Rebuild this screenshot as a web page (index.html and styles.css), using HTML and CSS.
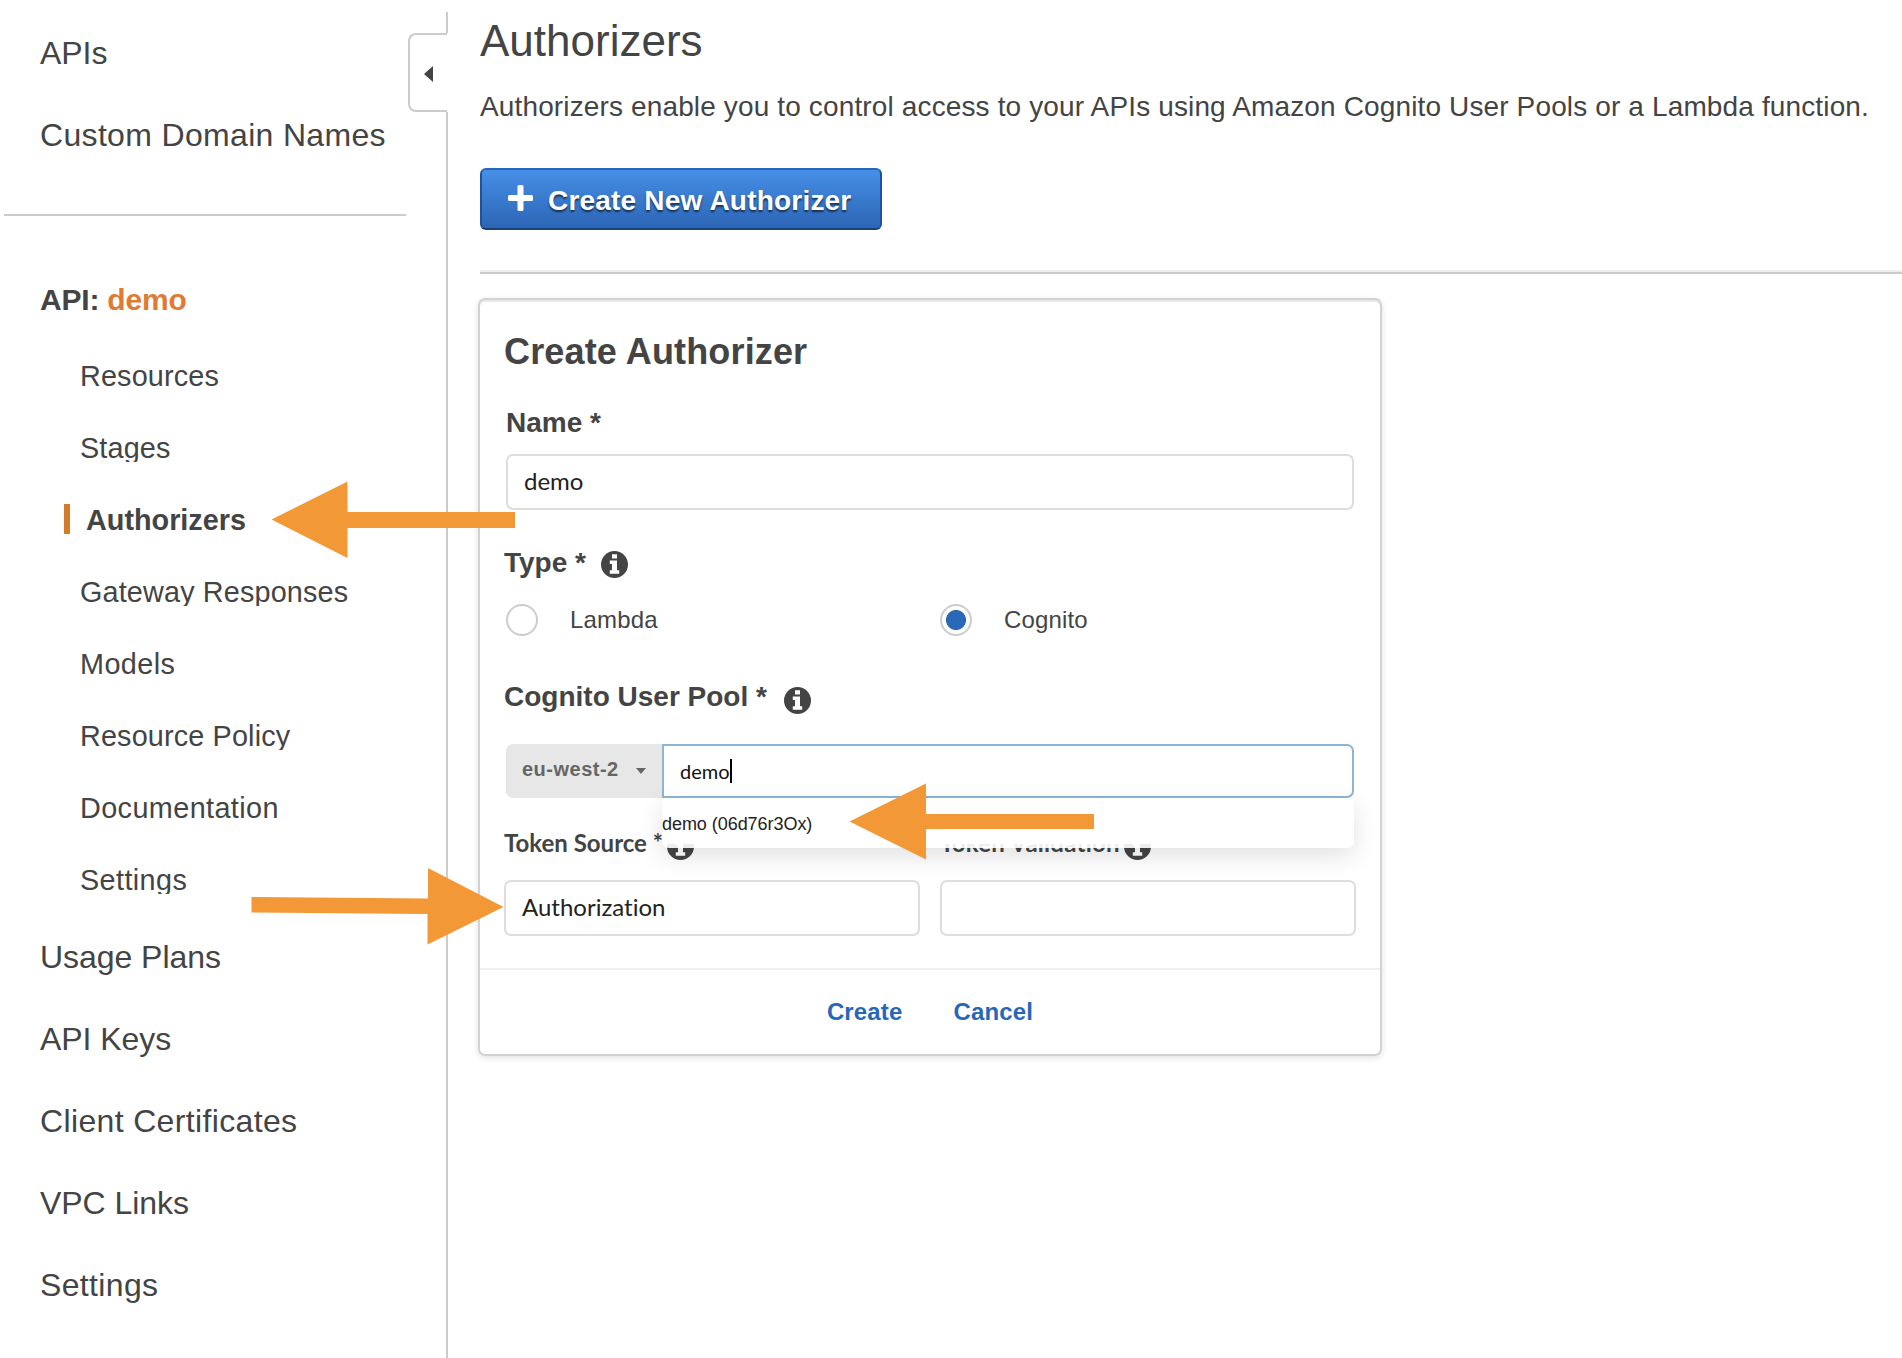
FILE: index.html
```html
<!DOCTYPE html>
<html lang="en">
<head>
<meta charset="utf-8">
<title>Authorizers</title>
<link rel="stylesheet" href="styles.css">
</head>
<body>
<svg class="defs" width="0" height="0">
  <symbol id="info" viewBox="0 0 27 27">
    <circle cx="13.5" cy="13.5" r="13.5" fill="#444"/>
    <path fill="#fff" d="M11 3.2h5v4.3h-5zM8.8 9.4H16v9.8h2.2v3.6H8.8v-3.6H11V13H8.8z"/>
  </symbol>
</svg>
<div class="page">
  <nav class="sidebar">
    <a class="nav-item tight">APIs</a>
    <a class="nav-item">Custom Domain Names</a>
    <div class="nav-rule"></div>
    <div class="api-name">API: <span class="accent">demo</span></div>
    <div class="sub-nav">
      <a class="sub-item">Resources</a>
      <a class="sub-item">Stages</a>
      <a class="sub-item active">Authorizers</a>
      <a class="sub-item">Gateway Responses</a>
      <a class="sub-item loose">Models</a>
      <a class="sub-item">Resource Policy</a>
      <a class="sub-item loose">Documentation</a>
      <a class="sub-item loose">Settings</a>
    </div>
    <a class="nav-item tight">Usage Plans</a>
    <a class="nav-item tight">API Keys</a>
    <a class="nav-item loose">Client Certificates</a>
    <a class="nav-item tight">VPC Links</a>
    <a class="nav-item loose">Settings</a>
  </nav>
  <div class="splitter">
    <div class="line-top"></div>
    <div class="collapse-tab"><svg width="9" height="16" viewBox="0 0 9 16"><path d="M9 0v16L0 8z" fill="#444"/></svg></div>
    <div class="line-rest"></div>
  </div>
  <main class="main">
    <h1 class="title">Authorizers</h1>
    <p class="intro">Authorizers enable you to control access to your APIs using Amazon Cognito User Pools or a Lambda function.</p>
    <button class="new-button"><svg width="25" height="26" viewBox="0 0 25 26"><path d="M9.5 1.5q0-1.500 1.500-1.500h3q1.500 0 1.500 1.500V10H23.500q1.500 0 1.500 1.500v3q0 1.500-1.500 1.500H15.500v8.500q0 1.500-1.500 1.500h-3q-1.500 0-1.500-1.500V16H1.500Q0 16 0 14.500v-3Q0 10 1.500 10H9.500z" fill="#fff"/></svg><span>Create New Authorizer</span></button>
    <div class="rule"></div>
    <section class="card">
      <div class="card-body">
        <h2 class="card-title">Create Authorizer</h2>
        <div class="label name-label">Name *</div>
        <div class="input name-input">demo</div>
        <div class="label type-label">Type * <svg class="info type-info"><use href="#info"/></svg></div>
        <div class="radios">
          <div class="radio"><span class="circle"></span>Lambda</div>
          <div class="radio"><span class="circle checked"></span>Cognito</div>
        </div>
        <div class="label pool-label"><span>Cognito User Pool *</span> <svg class="info pool-info"><use href="#info"/></svg></div>
        <div class="pool-row">
          <div class="region">eu-west-2<svg width="10" height="6" viewBox="0 0 10 6"><path d="M0 0h10L5 6z" fill="#666"/></svg></div>
          <div class="pool-input">demo<span class="caret"></span></div>
          <div class="suggestions"><div class="suggestion">demo (06d76r3Ox)</div></div>
        </div>
        <div class="tokens">
          <div class="token">
            <div class="token-label"><span>Token Source *</span><svg class="info"><use href="#info"/></svg></div>
            <div class="input">Authorization</div>
          </div>
          <div class="token">
            <div class="token-label validation"><span>Token Validation</span><svg class="info"><use href="#info"/></svg></div>
            <div class="input"></div>
          </div>
        </div>
      </div>
      <div class="card-footer"><a>Create</a><a>Cancel</a></div>
    </section>
  </main>
</div>
<svg class="arrows" width="1902" height="1358" viewBox="0 0 1902 1358" fill="#f29837">
  <path d="M271.500 519.500L347.500 481.500V512H515V528H347.500V558z"/>
  <path d="M251.500 897L428 898.500V868L503.500 907L427.500 944.500V914L251.500 912.500z"/>
  <path d="M849.500 821.500L926 783.500V814H1094V829H926V859.500z"/>
</svg>
</body>
</html>
```
FILE: styles.css
```css
* { box-sizing: border-box; }
body {
  margin: 0;
  background: #fff;
  color: #444;
  font-family: "Liberation Sans", Arial, sans-serif;
  overflow: hidden;
}
.defs { position: absolute; }
.page { display: flex; height: 1358px; overflow: hidden; }

.sidebar { width: 408px; padding-top: 12px; flex: none; }
.nav-item {
  display: block;
  padding-left: 40px;
  font-size: 32px;
  line-height: 82px;
  letter-spacing: 0.33px;
  white-space: nowrap;
}
.nav-item.tight { letter-spacing: -0.05px; }
.nav-item.loose { letter-spacing: 0.35px; }
.nav-rule { height: 2px; margin: 38px 2px 48px 4px; background: #ccc; }
.api-name { padding-left: 40px; font-size: 30px; line-height: 72px; font-weight: bold; letter-spacing: -0.2px; }
.accent { color: #e07b35; }
.sub-nav {
  display: flex;
  flex-direction: column;
  gap: 42px;
  padding: 24px 0 22px 64px;
}
.sub-item {
  height: 30px;
  overflow: hidden;
  padding-left: 16px;
  font-size: 28.8px;
  line-height: 32px;
  letter-spacing: 0.15px;
}
.sub-item.loose { letter-spacing: 0.4px; }
.sub-item.active { font-weight: bold; border-left: 6px solid #d47b2b; letter-spacing: 0; }

.splitter { width: 40px; flex: none; display: flex; flex-direction: column; padding-top: 12px; }
.line-top { height: 21px; border-right: 2px solid #ccc; }
.collapse-tab {
  height: 79px;
  margin-right: 1px;
  border: 2px solid #ccc;
  border-right: 0;
  border-radius: 8px 0 0 8px;
  padding: 2px 0 0 14px;
  display: flex;
  align-items: center;
}
.line-rest { flex: 1; border-right: 2px solid #ccc; }

.main { flex: 1; padding: 11px 0 0 32px; }
.title { margin: 0; font-size: 44px; line-height: 60px; font-weight: normal; }
.intro { margin: 16px 0 0; font-size: 28px; line-height: 40px; letter-spacing: 0.137px; white-space: nowrap; }
.new-button {
  display: flex;
  align-items: center;
  gap: 15px;
  width: 402px;
  height: 62px;
  margin: 41px 0 0;
  padding: 3px 0 0 26px;
  border: 2px solid;
  border-color: #2766bb #1f529a #1c4174;
  border-radius: 6px;
  background: linear-gradient(#468fe7, #2c65b5);
  color: #fff;
  font: bold 28px/40px "Liberation Sans", Arial, sans-serif;
  letter-spacing: 0.2px;
  text-shadow: 0 2px 2px rgba(0, 0, 0, 0.6);
  white-space: nowrap;
}
.new-button svg { margin-bottom: 6px; }
.rule { height: 4px; margin-top: 40px; background: linear-gradient(#eee 50%, #ccc 50%); }

.card {
  width: 904px;
  height: 758px;
  margin: 24px 0 0 -2px;
  border: 2px solid #d2d2d2;
  border-radius: 7px;
  box-shadow: 0 2px 6px rgba(0, 0, 0, 0.12), inset 0 2px 0 #e8e8e8;
}
.card-body { height: 668px; padding: 32px 24px 0; }
.card-title { margin: 0; font-size: 36px; line-height: 40px; letter-spacing: 0.15px; }
.label { display: flex; align-items: center; height: 32px; padding-top: 2px; font-size: 28px; line-height: 32px; font-weight: bold; }
.name-label { margin: 34px 0 0 2px; }
.input {
  height: 56px;
  padding-left: 16px;
  border: 2px solid #ddd;
  border-radius: 7px;
  color: #222;
  font: 24px/50px Lato, sans-serif;
  font-variant-ligatures: none;
}
.name-input { width: 848px; margin: 16px 0 0 2px; }
.type-label { margin-top: 36px; }
.info { width: 27px; height: 27px; flex: none; }
.type-info { margin: 2px 0 0 15px; }
.radios { display: flex; margin: 26px 0 0 2px; }
.radio { display: flex; flex: none; align-items: center; gap: 32px; width: 434px; font-size: 24px; line-height: 32px; letter-spacing: 0.15px; }
.radio + .radio { width: 200px; }
.circle { width: 32px; height: 32px; border: 2px solid #ccc; border-radius: 50%; }
.circle.checked { background: radial-gradient(circle, #2a68b8 9.600px, #fff 10.400px); }
.pool-label { margin-top: 44px; }
.pool-info { margin: 6px 0 0 17px; }
.pool-row { position: relative; display: flex; width: 848px; margin: 32px 0 0 2px; }
.region {
  display: flex;
  align-items: center;
  gap: 17px;
  width: 156px;
  height: 54px;
  padding: 0 0 3px 16px;
  border-radius: 7px 0 0 7px;
  background: #e7e7e7;
  color: #666;
  font-weight: bold;
  font-size: 20px;
  letter-spacing: 0.5px;
}
.region svg { margin-top: 3px; }
.pool-input {
  display: flex;
  align-items: center;
  flex: 1;
  height: 54px;
  padding-left: 16px;
  border: 2px solid #8cb4d5;
  border-radius: 0 7px 7px 0;
  color: #111;
  font: 20px/24px Lato, sans-serif;
}
.caret { width: 2px; height: 24px; background: #000; }
.suggestions {
  position: absolute;
  z-index: 1;
  left: 156px;
  top: 54px;
  width: 692px;
  height: 50px;
  border-radius: 0 0 7px 7px;
  background: linear-gradient(#fff 46px, rgba(255, 255, 255, 0.9) 46px);
  box-shadow: 0 8px 24px rgba(0, 0, 0, 0.12);
}
.suggestion { color: #222; font-size: 18px; line-height: 52px; letter-spacing: -0.05px; }
.tokens { display: flex; gap: 20px; margin-top: 30px; }
.token { width: 416px; }
.token-label { display: flex; height: 30px; margin-bottom: 22px; font: bold 24px/30px Lato, sans-serif; }
.token-label.validation { letter-spacing: 0.25px; }
.token-label .info { margin: 5px 0 0 4px; }
.card-footer {
  display: flex;
  justify-content: center;
  gap: 51px;
  border-top: 2px solid #f0f0f0;
  color: #2767b8;
  font-size: 24px;
  line-height: 84px;
  font-weight: bold;
  letter-spacing: 0.15px;
}
.arrows { position: absolute; left: 0; top: 0; z-index: 2; }
```
